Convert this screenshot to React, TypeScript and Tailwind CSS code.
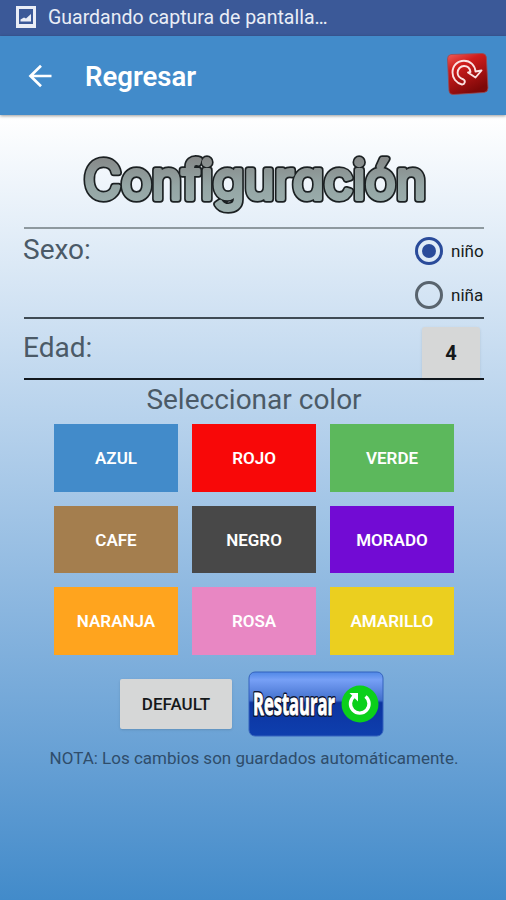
import React from 'react';
import { clsx } from 'clsx';

const COLORS = [
  { name: 'AZUL', bg: 'bg-[#428bca]' },
  { name: 'ROJO', bg: 'bg-[#f80808]' },
  { name: 'VERDE', bg: 'bg-[#5cb85c]' },
  { name: 'CAFE', bg: 'bg-[#a47e4e]' },
  { name: 'NEGRO', bg: 'bg-[#484848]' },
  { name: 'MORADO', bg: 'bg-[#720bd4]' },
  { name: 'NARANJA', bg: 'bg-[#ffa41e]' },
  { name: 'ROSA', bg: 'bg-[#e887c3]' },
  { name: 'AMARILLO', bg: 'bg-[#ebcf1f]' },
];

const StatusBar = () => (
  <div className="flex h-9 items-center bg-[#3b5998] pl-4 text-[#e9edf6]">
    <svg className="-mt-0.5" width="20" height="22" viewBox="0 0 20 22">
      <path fillRule="evenodd" fill="currentColor" d="M0 0h20v22H0zM3 3v15h14V3z" />
      <path fill="currentColor" d="M4.500 15.500v-2l3.500-2 2 1 5-4.500v7.500z" />
    </svg>
    <span className="ml-3 text-[19.500px] leading-none whitespace-nowrap">Guardando captura de pantalla…</span>
  </div>
);

const ReloadBadge = () => (
  <svg width="44" height="44" viewBox="0 0 44 44">
    <defs>
      <linearGradient id="badge" x1="0" y1="0" x2="0.5" y2="1">
        <stop offset="0" stopColor="#f0605a" />
        <stop offset="0.35" stopColor="#cf1c1c" />
        <stop offset="1" stopColor="#7d0808" />
      </linearGradient>
    </defs>
    <path d="M5 2.500L36 1.500Q40 1.500 40.300 5L42 36Q42 40 38 40.500L7 42.500Q3.500 42.500 3 39L1.500 7Q1.500 3 5 2.500z" fill="url(#badge)" stroke="#9a4a52" strokeWidth="0.8" />
    <path
      d="M17.500 27.500a2.700 2.700 0 0 1-1.500 5C10 31 6.500 26 6.500 20.500C6.500 13.500 11.500 8.800 18 8.800C24.500 8.800 29 13.500 29.500 19.500L35.500 18.500L29.500 25.500L22 20.500L24.500 20C24 16.500 21.500 14 18 14C14.500 14 11.600 17 11.600 20.800C11.600 24 14.500 26.500 17.500 27.500z"
      fill="none"
      stroke="#fbe3e3"
      strokeWidth="1.900"
      strokeLinejoin="round"
    />
  </svg>
);

const Toolbar = () => (
  <header className="relative flex h-[79px] items-center bg-[#428bca] pr-4 pl-[28px] text-white shadow-[0_1px_3px_rgba(0,0,0,0.4)]">
    <button aria-label="Volver">
      <svg width="24" height="24" viewBox="0 0 24 24" fill="none" stroke="currentColor" strokeWidth="2.700">
        <path d="M23.500 12H3M13 1.800L2.500 12L13 22.200" />
      </svg>
    </button>
    <h1 className="mt-[3px] ml-[33px] text-[27.500px] leading-none font-semibold">Regresar</h1>
    <button className="-mt-1 ml-auto" aria-label="Recargar">
      <ReloadBadge />
    </button>
  </header>
);

const titleText = {
  x: 15,
  y: 55,
  textLength: 342,
  lengthAdjust: 'spacingAndGlyphs' as const,
  strokeLinejoin: 'round' as const,
};

const Title = () => (
  <svg className="mx-auto block overflow-visible font-['Inter',sans-serif] text-[53px] leading-none font-normal [font-feature-settings:'cv11']" width="370" height="80" viewBox="0 0 370 80">
    <defs>
      <linearGradient id="title" gradientUnits="userSpaceOnUse" x1="0" y1="12" x2="0" y2="72">
        <stop offset="0" stopColor="#858787" />
        <stop offset="0.5" stopColor="#94a5a4" />
        <stop offset="1" stopColor="#9eb2b1" />
      </linearGradient>
    </defs>
    <text {...titleText} stroke="#1b2022" strokeWidth="7.500" aria-hidden="true">Configuración</text>
    <text {...titleText} fill="url(#title)" stroke="url(#title)" strokeWidth="4">Configuración</text>
  </svg>
);

interface RadioProps {
  label: string;
  checked: boolean;
  onSelect: () => void;
}

const Radio: React.FC<RadioProps> = ({ label, checked, onSelect }) => (
  <button role="radio" aria-checked={checked} onClick={onSelect} className="flex h-[45px] items-center gap-2">
    <span
      className={clsx(
        'flex size-7 items-center justify-center rounded-full border-[3px]',
        checked ? 'border-[#2a4b9a]' : 'border-[#59646e]'
      )}
    >
      {checked && <span className="size-3.5 rounded-full bg-[#2a4b9a]" />}
    </span>
    <span className="mt-0.5 w-[33px] text-left text-[17px] text-[#161b20]">{label}</span>
  </button>
);

const restoreText = {
  x: 5,
  y: 44,
  textLength: 82,
  lengthAdjust: 'spacingAndGlyphs' as const,
  strokeLinejoin: 'round' as const,
};

const RestoreButton = () => (
  <button className="h-[66px] w-[136px]">
    <svg className="overflow-visible font-['Open_Sans',sans-serif] text-[30px] font-bold" width="136" height="66" viewBox="0 0 136 66">
      <defs>
        <linearGradient id="restore" x1="0" y1="0" x2="0" y2="1">
          <stop offset="0" stopColor="#4f88e6" />
          <stop offset="0.12" stopColor="#77a0f6" />
          <stop offset="0.44" stopColor="#4270cd" />
          <stop offset="0.48" stopColor="#0c34a0" />
          <stop offset="1" stopColor="#0e3fae" />
        </linearGradient>
      </defs>
      <rect x="1" y="1" width="134" height="64" rx="6" fill="url(#restore)" stroke="#3563bd" />
      <text {...restoreText} stroke="#0c1634" strokeWidth="4" aria-hidden="true">Restaurar</text>
      <text {...restoreText} fill="#fff" stroke="#fff" strokeWidth="0.9">Restaurar</text>
      <circle cx="112" cy="33" r="18.500" fill="#0bd01a" />
      <path d="M117.500 25.500A9.300 9.300 0 1 1 106 25.500" fill="none" stroke="#fff" strokeWidth="3.400" />
      <path d="M101.500 22H110V30.500z" fill="#fff" />
    </svg>
  </button>
);

export default function App() {
  const [sex, setSex] = React.useState('niño');

  return (
    <div className="flex h-[900px] w-[506px] flex-col overflow-hidden font-['Roboto',sans-serif]">
      <StatusBar />
      <Toolbar />
      <main className="flex-1 bg-linear-to-b from-white to-[#428bca] pt-[29px] pr-[22px] pl-[24px] text-[#4b5a67]">
        <Title />

        <section className="mt-[3px] flex h-[92px] justify-between border-y-2 border-t-[#8e999f] border-b-[#3f4b55]">
          <h2 className="mt-[3px] -ml-px text-[28px] leading-9">Sexo:</h2>
          <div role="radiogroup" className="flex flex-col">
            {['niño', 'niña'].map((option) => (
              <Radio key={option} label={option} checked={sex === option} onSelect={() => setSex(option)} />
            ))}
          </div>
        </section>

        <section className="flex h-[61px] justify-between border-b-2 border-[#12181e]">
          <h2 className="mt-[11px] -ml-px text-[28px] leading-9">Edad:</h2>
          <button className="mt-2 mr-1 w-[58px] rounded-t-[3px] bg-[#d6d7d7] text-[20px] font-bold text-[#15181a] shadow-sm">4</button>
        </section>

        <h2 className="mt-[2px] text-center text-[28px] leading-9">Seleccionar color</h2>

        <div className="mx-auto mt-[6px] grid w-[400px] grid-cols-3 gap-x-[14px] gap-y-[14px]">
          {COLORS.map((color) => (
            <button key={color.name} className={clsx('h-[67.500px] pt-0.5 text-[17px] font-semibold text-white', color.bg)}>
              {color.name}
            </button>
          ))}
        </div>

        <div className="mt-4 ml-[96px] flex items-center gap-4">
          <button className="h-[50px] w-[112px] rounded-[2px] bg-[#d6d7d7] pt-0.5 text-[17px] font-medium text-[#15181a] shadow-sm">DEFAULT</button>
          <RestoreButton />
        </div>

        <p className="mt-[9px] text-center text-[17px] leading-6 text-[#2f4d6b]">
          NOTA: Los cambios son guardados automáticamente.
        </p>
      </main>
    </div>
  );
}
